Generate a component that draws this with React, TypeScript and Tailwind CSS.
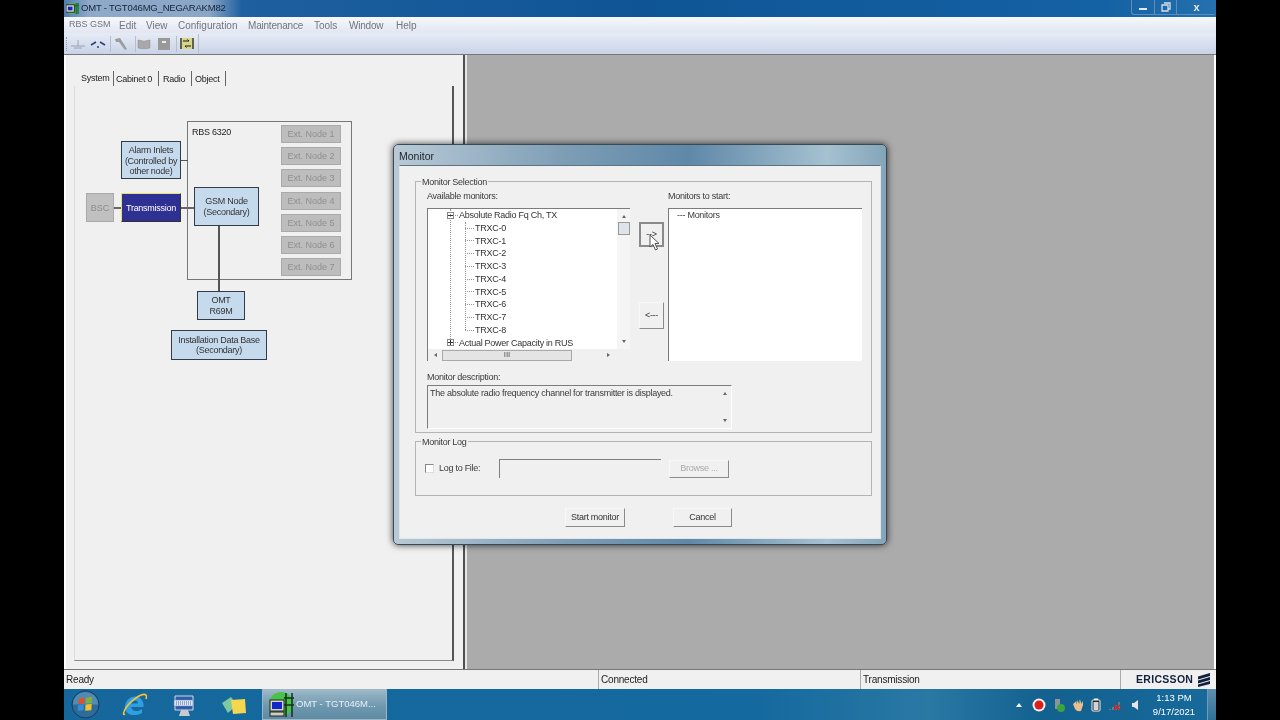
import React from "react";

const menus = [
  { label: "RBS GSM", cls: "w-[50px] text-[9px]" },
  { label: "Edit", cls: "w-[27px]" },
  { label: "View", cls: "w-[32px]" },
  { label: "Configuration", cls: "w-[70px]" },
  { label: "Maintenance", cls: "w-[66px] tracking-[-0.2px]" },
  { label: "Tools", cls: "w-[35px]" },
  { label: "Window", cls: "w-[47px] tracking-[-0.2px]" },
  { label: "Help", cls: "w-[30px]" },
];
const tabs = [
  { label: "System", cls: "w-[34px] pl-[1px]" },
  { label: "Cabinet 0", cls: "w-[45px] pl-[2px] pt-[2px]" },
  { label: "Radio", cls: "w-[33px] pl-[4px] pt-[2px]" },
  { label: "Object", cls: "w-[34px] pl-[3px] pt-[2px]" },
];
const trxc = ["TRXC-0", "TRXC-1", "TRXC-2", "TRXC-3", "TRXC-4", "TRXC-5", "TRXC-6", "TRXC-7", "TRXC-8"];

const extNodes = [
  { label: "Ext. Node 1", top: "top-[70px]" },
  { label: "Ext. Node 2", top: "top-[92px]" },
  { label: "Ext. Node 3", top: "top-[114px]" },
  { label: "Ext. Node 4", top: "top-[137px]" },
  { label: "Ext. Node 5", top: "top-[159px]" },
  { label: "Ext. Node 6", top: "top-[181px]" },
  { label: "Ext. Node 7", top: "top-[203px]" },
];

const nodeBlue = "absolute flex flex-col items-center justify-center border border-[#333b47] bg-[#c6daee] text-center text-[9px] leading-[10.5px] tracking-[-0.27px] text-[#333]";

function Diagram() {
  return (
    <div className="relative h-full w-full">
      {/* canvas origin is x=64 y=55 on the page */}
      <div className="absolute left-[123px] top-[66px] h-[159px] w-[165px] border border-[#777] bg-[#f0f0f0]">
        <span className="absolute left-[4px] top-[4px] text-[9px] tracking-[-0.27px] text-[#222]">RBS 6320</span>
      </div>
      <div className="absolute left-[117px] top-[105px] h-px w-[7px] bg-[#555]" />
      <div className="absolute left-[50px] top-[152px] h-[2px] w-[8px] bg-[#666]" />
      <div className="absolute left-[116px] top-[152px] h-[2px] w-[15px] bg-[#666]" />
      <div className="absolute left-[154px] top-[171px] h-[66px] w-[2px] bg-[#555]" />
      <div className={`${nodeBlue} left-[57px] top-[86px] h-[38px] w-[60px] pt-[2px]`}>
        <span>Alarm Inlets</span>
        <span>(Controlled by</span>
        <span>other node)</span>
      </div>
      <div className="absolute left-[22px] top-[138px] flex h-[29px] w-[28px] items-center justify-center border border-[#aaa] bg-[#c0c0c0] pt-[2px] text-[9px] text-[#8b8b8b]">BSC</div>
      <div className="absolute left-[57px] top-[138px] flex h-[29px] w-[60px] items-center justify-center border border-[#333] border-l-[#e8e070] border-t-[#e8e070] bg-[#2e3192] pt-[2px] text-[9px] tracking-[-0.27px] text-white">Transmission</div>
      <div className={`${nodeBlue} left-[130px] top-[132px] h-[39px] w-[65px]`}>
        <span>GSM Node</span>
        <span>(Secondary)</span>
      </div>
      {extNodes.map((n) => (
        <div key={n.label} className={`absolute left-[217px] ${n.top} flex h-[18px] w-[60px] items-center justify-center border border-[#aaa] bg-[#bdbdbd] pt-[1px] text-[9px] text-[#8f8f8f]`}>{n.label}</div>
      ))}
      <div className={`${nodeBlue} left-[133px] top-[236px] h-[29px] w-[48px]`}>
        <span>OMT</span>
        <span>R69M</span>
      </div>
      <div className={`${nodeBlue} left-[107px] top-[275px] h-[30px] w-[96px]`}>
        <span>Installation Data Base</span>
        <span>(Secondary)</span>
      </div>
    </div>
  );
}

function WinButton({ children, className }: { children: React.ReactNode; className: string }) {
  return (
    <div className={`flex items-center justify-center border border-[#f7f7f7] border-b-[#8a8a8a] border-r-[#8a8a8a] bg-[#f0f0f0] text-[9px] text-[#333] ${className}`}>
      {children}
    </div>
  );
}

function Arrow({ d, className }: { d: string; className: string }) {
  return (
    <svg viewBox="0 0 8 8" className={className}>
      <path d={d} fill="#666" />
    </svg>
  );
}

function TreeList() {
  return (
    <div className="relative flex h-[153px] w-[203px] border-l border-t border-[#7c7c7c] bg-white">
      <div className="relative h-[140px] w-[190px] overflow-hidden text-[9px] leading-[12.75px] text-[#333]">
        <div className="absolute left-[22px] top-0 h-[132px] border-l border-dotted border-[#999]" />
        <div className="absolute left-[37px] top-[13px] h-[108px] border-l border-dotted border-[#999]" />
        <div className="flex h-[12.75px] items-center pl-[19px]">
          <span className="mr-[1px] flex h-[7px] w-[7px] items-center justify-center border border-[#888] bg-white">
            <span className="h-px w-[5px] bg-[#333]" />
          </span>
          <span className="mr-[1px] w-[3px] border-t border-dotted border-[#999]" />
          <span>Absolute Radio Fq Ch, TX</span>
        </div>
        {trxc.map((t) => (
          <div key={t} className="flex h-[12.75px] items-center pl-[37px]">
            <span className="mr-[1px] w-[9px] border-t border-dotted border-[#999]" />
            <span>{t}</span>
          </div>
        ))}
        <div className="flex h-[12.75px] items-center pl-[19px]">
          <span className="relative mr-[1px] flex h-[7px] w-[7px] items-center justify-center border border-[#888] bg-white">
            <span className="h-px w-[5px] bg-[#333]" />
            <span className="absolute left-[2px] top-0 h-[5px] w-px bg-[#333]" />
          </span>
          <span className="mr-[1px] w-[3px] border-t border-dotted border-[#999]" />
          <span>Actual Power Capacity in RUS</span>
        </div>
      </div>
      {/* vertical scrollbar */}
      <div className="flex h-[140px] w-[13px] flex-col items-center bg-[#f5f5f5]">
        <Arrow d="M4 3 L6 6 L2 6 Z" className="mt-[3px] h-[8px] w-[8px]" />
        <div className="mt-[2px] h-[13px] w-[12px] border border-[#9a9a9a] bg-[#dfe3ea]" />
        <Arrow d="M2 2 L6 2 L4 5 Z" className="mt-auto mb-[3px] h-[8px] w-[8px]" />
      </div>
      {/* horizontal scrollbar */}
      <div className="absolute bottom-0 left-0 flex h-[12px] w-[190px] items-center bg-[#f0f0f0] pl-[3px]">
        <Arrow d="M3 4 L6 2 L6 6 Z" className="h-[8px] w-[8px]" />
        <div className="ml-[3px] flex h-[11px] w-[130px] items-center justify-center border border-[#a9a9a9] bg-[#e4e4e4] text-[8px] leading-none tracking-normal text-[#555]">III</div>
        <Arrow d="M3 2 L6 4 L3 6 Z" className="ml-[32px] h-[8px] w-[8px]" />
      </div>
      <div className="absolute bottom-0 right-0 h-[12px] w-[13px] bg-[#f0f0f0]" />
    </div>
  );
}

function MonitorDialog() {
  return (
    <div className="absolute left-[393px] top-[144px] flex h-[401px] w-[494px] flex-col rounded-[5px] border border-[#3a4a55] bg-[linear-gradient(90deg,#b9cad6_0%,#7d9db5_35%,#5f88a8_60%,#a6c1d0_88%,#84a5b9_100%)] px-[5px] pb-[5px] shadow-[0_0_7px_rgba(0,0,0,0.75)]">
      <div className="flex h-[20px] shrink-0 items-center pt-[3px] text-[10.5px] text-[#1c2228]">Monitor</div>
      <div className="flex flex-1 flex-col border border-[#dfe7ec] border-t-[#5d7384] bg-[#f0f0f0] px-[15px] pt-[15px] text-[9px] tracking-[-0.27px] text-[#3a3a3a]">
        {/* Monitor Selection group */}
        <div className="relative h-[252px] w-[457px] shrink-0 border border-[#b4b4b4] pl-[11px] pt-[8px]">
          <span className="absolute -top-[6px] left-[5px] bg-[#f0f0f0] px-[1px]">Monitor Selection</span>
          <div className="flex">
            <div className="flex flex-col">
              <span className="h-[18px] leading-[13px]">Available monitors:</span>
              <TreeList />
            </div>
            <div className="ml-[9px] mt-[18px] flex w-[25px] flex-col">
              <WinButton className="relative mt-[14px] h-[25px] w-[25px] border-2 border-[#8a8a8a]! bg-[#eeeeee]">
                <span>--&gt;</span>
                <svg viewBox="0 0 12 18" className="absolute left-[8px] top-[10px] h-[18px] w-[12px]">
                  <path d="M1 1 L1 13 L4 10.5 L6.5 16 L8.5 15 L6 9.5 L10 9.5 Z" fill="#fff" stroke="#555" strokeWidth="1" />
                </svg>
              </WinButton>
              <WinButton className="mt-[55px] h-[27px] w-[25px]">&lt;---</WinButton>
            </div>
            <div className="ml-[4px] flex flex-col">
              <span className="h-[18px] leading-[13px]">Monitors to start:</span>
              <div className="h-[153px] w-[194px] border-l border-t border-[#7c7c7c] bg-white pl-[8px] leading-[12.75px]">--- Monitors</div>
            </div>
          </div>
          <div className="mt-[10px] h-[14px] leading-[12px]">Monitor description:</div>
          <div className="flex h-[44px] w-[305px] border border-[#7c7c7c] border-b-white border-r-white">
            <span className="flex-1 pl-[2px] pt-[1px] leading-[12px]">The absolute radio frequency channel for transmitter is displayed.</span>
            <div className="flex w-[13px] flex-col items-center">
              <Arrow d="M4 3 L6 6 L2 6 Z" className="mt-[3px] h-[8px] w-[8px]" />
              <Arrow d="M2 2 L6 2 L4 5 Z" className="mt-auto mb-[3px] h-[8px] w-[8px]" />
            </div>
          </div>
        </div>
        {/* Monitor Log group */}
        <div className="relative mt-[8px] flex h-[55px] w-[457px] shrink-0 items-center border border-[#b4b4b4] pl-[9px]">
          <span className="absolute -top-[6px] left-[5px] bg-[#f0f0f0] px-[1px]">Monitor Log</span>
          <span className="h-[9px] w-[9px] border border-[#888] border-b-[#ddd] border-r-[#ddd] bg-white" />
          <span className="ml-[5px] w-[56px]">Log to File:</span>
          <span className="ml-[4px] h-[19px] w-[162px] border-l border-t border-[#808080] bg-[#f0f0f0]" />
          <WinButton className="ml-[8px] h-[18px] w-[60px] text-[#aaa]">Browse ...</WinButton>
        </div>
        <div className="mt-[12px] flex gap-[48px] pl-[150px]">
          <WinButton className="h-[19px] w-[60px]">Start monitor</WinButton>
          <WinButton className="h-[19px] w-[59px]">Cancel</WinButton>
        </div>
      </div>
    </div>
  );
}

function ToolbarIcons() {
  return (
    <div className="flex h-full items-center pl-[2px]">
      <span className="h-[14px] border-l border-dotted border-[#999]" />
      <svg viewBox="0 0 16 12" className="ml-[3px] h-[12px] w-[16px]">
        <path d="M1 8 H15 M8 2 V8 M4 10 H12" stroke="#9aa3b3" strokeWidth="1" fill="none" />
      </svg>
      <svg viewBox="0 0 16 12" className="ml-[4px] h-[12px] w-[16px]">
        <path d="M1 7 L6 4 M10 4 L15 7 M7 9 L9 9" stroke="#26417c" strokeWidth="1.5" fill="none" />
      </svg>
      <span className="ml-[4px] h-[16px] border-l border-[#b7bfcd]" />
      <svg viewBox="0 0 16 16" className="ml-[2px] h-[16px] w-[16px]">
        <path d="M2 3 L7 2 L14 13 L12 14 L6 6 L3 6 Z" fill="#9c9c9c" />
      </svg>
      <span className="ml-[6px] h-[16px] border-l border-[#b7bfcd]" />
      <svg viewBox="0 0 14 12" className="ml-[1px] h-[12px] w-[14px]">
        <path d="M1 2 L6.5 3 V11 L1 10 Z M7.5 3 L13 2 V10 L7.5 11 Z" fill="#a9a9a9" stroke="#8a8a8a" strokeWidth="0.5" />
      </svg>
      <svg viewBox="0 0 12 12" className="ml-[7px] h-[12px] w-[12px]">
        <rect width="12" height="12" fill="#999" />
        <rect x="4" y="3" width="4" height="2" fill="#eee" />
      </svg>
      <span className="ml-[6px] h-[16px] border-l border-[#b7bfcd]" />
      <svg viewBox="0 0 14 13" className="ml-[3px] h-[13px] w-[14px]">
        <path d="M1 1 V12 M13 1 V12" stroke="#3a3a14" strokeWidth="1.5" />
        <rect x="2" y="1" width="10" height="11" fill="#d8d48a" />
        <path d="M3 4 H9 L7.5 2.5 M11 9 H5 L6.5 10.5" stroke="#1b1b1b" fill="none" />
      </svg>
      <span className="ml-[4px] h-[20px] border-l border-[#b7bfcd]" />
    </div>
  );
}

function Taskbar() {
  return (
    <div className="flex h-[31px] shrink-0 items-center bg-[linear-gradient(90deg,#16689c_0%,#14699e_60%,#2a78a4_75%,#12618f_85%,#176a9b_100%)]">
      <div className="flex w-[42px] items-center justify-center">
        <svg viewBox="0 0 30 30" className="h-[29px] w-[29px]">
          <circle cx="15" cy="15" r="14" fill="#2f6a98" stroke="#0f3f63" />
          <path d="M15 2 A13 13 0 0 1 28 15 H2 A13 13 0 0 1 15 2 Z" fill="#7aa8c8" opacity="0.5" />
          <path d="M8 9 L14 8 L13.5 14 L7.5 14.5 Z" fill="#e0512b" />
          <path d="M15.5 8 L22 7 L21.5 13.5 L15 14 Z" fill="#7eb03a" />
          <path d="M7.3 15.5 L13.3 15 L13 21 L7 21.5 Z" fill="#2f8fd8" />
          <path d="M15 15 L21.4 14.6 L21 21 L14.7 21.5 Z" fill="#f3c22b" />
        </svg>
      </div>
      <div className="ml-[10px] flex w-[38px] justify-center">
        <svg viewBox="0 0 26 26" className="h-[26px] w-[26px]">
          <path d="M3 17 C2 8 10 3 16 5 C21 7 22 12 21.5 15 H9 C10 20 16 20 20 17 V21 C13 25 4 23 3 17 Z M9 11.5 H16 C16 7.5 10 7.5 9 11.5 Z" fill="#2f9fe3" fillRule="evenodd" />
          <path d="M3 22 C0 25 1 15 14 6 C21 1 26 1 24 7" stroke="#f2c23a" strokeWidth="1.6" fill="none" />
        </svg>
      </div>
      <div className="ml-[11px] flex w-[38px] justify-center">
        <svg viewBox="0 0 26 26" className="h-[26px] w-[26px]">
          <path d="M4 4 H22 V18 H4 Z" fill="#2f5da8" stroke="#d5dbe4" />
          <rect x="3" y="8" width="19" height="6" fill="#dfe7f2" stroke="#5d7db5" strokeWidth="0.5" />
          <path d="M5 10 H20 M5 12 H20" stroke="#3a5f9f" strokeDasharray="1 1" />
          <path d="M10 18 H17 L19 24 H8 Z" fill="#c6cbd1" />
        </svg>
      </div>
      <div className="ml-[12px] flex w-[38px] justify-center">
        <svg viewBox="0 0 26 22" className="h-[22px] w-[26px]">
          <path d="M1 9 L10 3 L16 11 L7 19 Z" fill="#7fc8a0" />
          <path d="M10 6 L24 5 L25 19 L12 20 Z" fill="#f5d64f" />
        </svg>
      </div>
      <div className="ml-[9px] flex h-[31px] w-[125px] items-center border border-[#9fb6c3] bg-[linear-gradient(180deg,#9cb9c9_0%,#6f98af_55%,#5e8ba4_100%)] text-[9.5px] text-[#e8f0f5]">
        <svg viewBox="0 0 28 28" className="ml-[5px] h-[28px] w-[28px] shrink-0">
          <circle cx="13" cy="13" r="12" fill="#49c24a" />
          <path d="M18 2 V26 M24 2 V26 M16 7 H26 M16 14 H26" stroke="#15301a" strokeWidth="1.5" />
          <rect x="2" y="9" width="14" height="11" fill="#d7d7c8" stroke="#222" />
          <rect x="4" y="11" width="10" height="7" fill="#1226c9" />
          <rect x="2" y="21" width="14" height="4" fill="#cfcfc0" stroke="#222" />
        </svg>
        <span className="truncate">OMT - TGT046M...</span>
      </div>
      <div className="ml-auto flex h-full items-center">
        <svg viewBox="0 0 8 6" className="h-[6px] w-[8px]"><path d="M4 1 L7 5 H1 Z" fill="#fff" /></svg>
        <svg viewBox="0 0 14 14" className="ml-[9px] h-[14px] w-[14px]">
          <circle cx="7" cy="7" r="6.5" fill="#f2f2f2" />
          <circle cx="7" cy="7" r="4.5" fill="#d8201c" />
        </svg>
        <svg viewBox="0 0 14 14" className="ml-[6px] h-[14px] w-[14px]">
          <rect x="3" y="1" width="5" height="10" fill="#8d939a" />
          <circle cx="9" cy="10" r="4" fill="#3aa53c" />
        </svg>
        <svg viewBox="0 0 14 14" className="ml-[5px] h-[14px] w-[14px]">
          <path d="M2 6 L4 11 Q6 14 10 13 L12 7 V3 L10 6 V1.5 L8.5 6 V1 L7 6 V1.5 L5.5 6.5 V3 Z" fill="#e9c08d" />
        </svg>
        <svg viewBox="0 0 10 14" className="ml-[6px] h-[14px] w-[10px]">
          <rect x="1" y="2" width="8" height="11" rx="1" fill="#1f2a33" stroke="#f2f2f2" />
          <rect x="3" y="0.5" width="4" height="1.5" fill="#f2f2f2" />
          <rect x="2.5" y="4" width="5" height="8" fill="#d0d4d8" />
        </svg>
        <svg viewBox="0 0 14 12" className="ml-[7px] h-[12px] w-[14px]">
          <path d="M1 10 H3 V11 H1 Z M4 8 H6 V11 H4 Z M7 6 H9 V11 H7 Z M10 3 H12 V11 H10 Z" fill="#5f7f96" />
          <path d="M6 6 L12 11 M12 6 L6 11" stroke="#d8201c" strokeWidth="1.5" />
        </svg>
        <svg viewBox="0 0 8 12" className="ml-[9px] h-[12px] w-[8px]"><path d="M1 4 H3 L7 1 V11 L3 8 H1 Z" fill="#e6e6e6" /></svg>
        <div className="ml-[11px] flex w-[48px] flex-col items-center pt-[1px] text-[9.5px] leading-[14.5px] text-white">
          <span>1:13 PM</span>
          <span>9/17/2021</span>
        </div>
        <div className="ml-[9px] h-full w-[9px] border-l border-[#6f9ab5] bg-[linear-gradient(180deg,#5f8fae,#2f7099)]" />
      </div>
    </div>
  );
}

export default function App() {
  return (
    <div className="relative flex h-[720px] w-[1280px] justify-center overflow-hidden bg-black font-['Liberation_Sans',Arial,sans-serif] blur-[0.35px]">
      <div className="flex h-full w-[1152px] flex-col bg-[#f0f0f0]">
        {/* title bar */}
        <div className="flex h-[17px] shrink-0 items-center bg-[linear-gradient(90deg,#4f7dae_0px,#8fa9c8_25px,#8aa6c6_145px,#1e5f9f_178px,#0f5596_50%,#1461a3_90%,#2570ae_100%)]">
          <svg viewBox="0 0 14 14" className="ml-[2px] h-[13px] w-[13px]">
            <circle cx="6" cy="7" r="6" fill="#49c24a" />
            <rect x="0" y="3" width="9" height="8" fill="#d7d7c8" stroke="#222" />
            <rect x="2" y="5" width="5" height="4" fill="#1226c9" />
            <path d="M11 1 V13 M13 1 V13 M9 4 H14" stroke="#12702a" strokeWidth="1.4" />
          </svg>
          <span className="ml-[2px] text-[9.5px] tracking-[-0.2px] text-[#16233a]">OMT - TGT046MG_NEGARAKM82</span>
          <div className="ml-auto flex h-[15px] items-start self-start rounded-b-[3px] border-b border-l border-[#5f8db5]">
            <div className="flex h-[14px] w-[22px] items-center justify-center">
              <span className="mt-[3px] h-[2px] w-[8px] bg-[#e3e9f0]" />
            </div>
            <div className="relative flex h-[14px] w-[22px] items-center justify-center border-l border-[#5f8db5]">
              <svg viewBox="0 0 10 10" className="h-[10px] w-[10px]">
                <path d="M3 1 H9 V7 H7 M1 3 H7 V9 H1 Z" stroke="#d6dfe8" strokeWidth="1.3" fill="none" />
              </svg>
            </div>
            <div className="flex h-[14px] w-[40px] items-center justify-center border-l border-[#5f8db5] text-[11px] font-bold leading-none text-[#e3e9f0]">x</div>
          </div>
        </div>
        {/* menu bar */}
        <div className="flex h-[16px] shrink-0 items-center bg-[linear-gradient(180deg,#f6f8fd,#e1e6f1)] pl-[5px] text-[10px] text-[#70757e]">
          {menus.map((m) => (
            <span key={m.label} className={`whitespace-nowrap ${m.cls}`}>{m.label}</span>
          ))}
        </div>
        {/* toolbar */}
        <div className="h-[22px] shrink-0 border-b border-[#777] bg-[linear-gradient(180deg,#e7ebf6,#c9d3e7)]">
          <ToolbarIcons />
        </div>
        {/* workspace */}
        <div className="flex min-h-0 flex-1 bg-[#ababab]">
          <div className="relative h-full w-[401px] shrink-0 border-l-2 border-r-2 border-[#505050] border-l-white bg-[#f0f0f0]">
            <div className="ml-[14px] flex h-[31px] items-end text-[9px] tracking-[-0.27px] text-[#222]">
              {tabs.map((t) => (
                <span key={t.label} className={`flex h-[15px] items-center whitespace-nowrap border-r border-[#666] ${t.cls}`}>{t.label}</span>
              ))}
            </div>
            <div className="ml-[8px] h-[575px] w-[380px] border-b border-l border-r-2 border-[#555] border-b-[#888] border-l-[#dcdcdc]" />
            <div className="absolute -left-[2px] bottom-0 right-0 top-0">
              <Diagram />
            </div>
          </div>
          <div className="w-[2px] shrink-0 bg-[#e6e6e6]" />
          <div className="flex-1 border-r-2 border-white" />
        </div>
        {/* status bar */}
        <div className="flex h-[20px] shrink-0 items-center border-t border-[#777] bg-[#f0f0f0] text-[10px] tracking-[-0.2px] text-[#222]">
          <span className="w-[534px] pl-[2px]">Ready</span>
          <span className="h-full w-[262px] border-l border-[#aaa] pl-[2px] leading-[19px]">Connected</span>
          <span className="h-full w-[260px] border-l border-[#aaa] pl-[2px] leading-[19px]">Transmission</span>
          <span className="flex h-full flex-1 items-center border-l border-[#aaa] pl-[15px]">
            <span className="text-[10.5px] font-bold tracking-[0.3px] text-[#14213d]">ERICSSON</span>
            <svg viewBox="0 0 14 14" className="ml-[4px] h-[14px] w-[14px]">
              <path d="M1 3.5 L13 0 V3 L1 6.5 Z M1 7.5 L13 4 V7 L1 10.5 Z M1 11.5 L13 8 V11 L1 14 Z" fill="#14213d" />
            </svg>
          </span>
        </div>
        <Taskbar />
      </div>
      <MonitorDialog />
    </div>
  );
}
